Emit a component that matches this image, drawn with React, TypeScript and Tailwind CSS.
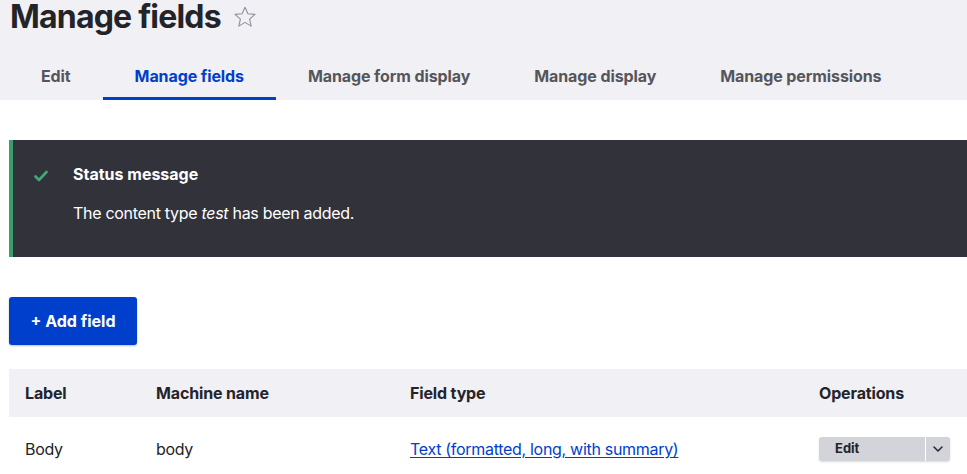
import { ChevronDown } from "lucide-react";

const tabs = [
    { label: "Edit", active: false },
    { label: "Manage fields", active: true },
    { label: "Manage form display", active: false },
    { label: "Manage display", active: false },
    { label: "Manage permissions", active: false },
];

function Star() {
    return (
        <svg width="24" height="24" viewBox="0 0 24 24" className="shrink-0">
            <path
                d="M12 2.2l2.9 6.6 7.1.6-5.4 4.7 1.6 7-6.2-3.7-6.2 3.7 1.6-7L2 9.4l7.1-.6z"
                fill="none"
                stroke="#8e929c"
                strokeWidth="1.1"
                strokeLinejoin="round"
            />
        </svg>
    );
}

function Check() {
    return (
        <svg width="14" height="12" viewBox="0 0 14 12">
            <path
                d="M1.5 6.5l3.5 3.5 7.5-8"
                fill="none"
                stroke="#42a877"
                strokeWidth="2.6"
                strokeLinecap="round"
                strokeLinejoin="round"
            />
        </svg>
    );
}

export default function App() {
    return (
        <div
            className="w-[967px] h-[474px] overflow-hidden bg-white text-[#232429]"
            style={{ fontFamily: "Inter, 'Noto Sans', sans-serif" }}
        >
            {/* header */}
            <div className="bg-[#f0f0f5] h-[100px] flex flex-col">
                <div className="pl-[10px] flex items-center gap-[12px] h-[52px] -mt-[9px]">
                    <h1 className="text-[32px] font-bold leading-[34px] tracking-[-0.8px] text-[#232429]">
                        Manage fields
                    </h1>
                    <Star />
                </div>
                <nav className="flex pl-[9px] h-[48px] mt-[9px]">
                    {tabs.map((t) => (
                        <div
                            key={t.label}
                            className={
                                t.active
                                    ? "px-8 flex items-center text-[16px] font-bold tracking-[-0.1px] text-[#003ecc] border-b-[3px] border-[#003ecc] pt-[3px]"
                                    : "px-8 flex items-center text-[16px] font-bold tracking-[-0.1px] text-[#55565b] border-b-[3px] border-transparent pt-[3px]"
                            }
                        >
                            {t.label}
                        </div>
                    ))}
                </nav>
            </div>

            <div className="pl-[9px] pt-[40px]">
                {/* status message */}
                <div className="h-[117px] bg-[#32323b] border-l-[4px] border-[#3b9d6c] flex">
                    <div className="w-[60px] pl-[21px] pt-[30px]">
                        <Check />
                    </div>
                    <div className="pt-[24px] text-white">
                        <div className="text-[16px] font-bold leading-[20px]">Status message</div>
                        <div className="text-[16px] leading-[20px] mt-[19px] tracking-[-0.3px]">
                            The content type <em>test</em> has been added.
                        </div>
                    </div>
                </div>

                {/* add field */}
                <div className="pt-[40px]">
                    <button className="h-[48px] w-[128px] bg-[#003ecc] text-white text-[16px] font-bold rounded-[3px] shadow-[0_1px_2px_rgba(0,0,0,0.25)]">
                        + Add field
                    </button>
                </div>

                {/* table */}
                <div className="mt-[24px]">
                    <div className="grid grid-cols-[131px_254px_409px_1fr] h-[48px] items-center bg-[#f0f0f5] text-[16px] font-bold tracking-[-0.15px]">
                        <div className="px-4">Label</div>
                        <div className="px-4">Machine name</div>
                        <div className="px-4">Field type</div>
                        <div className="px-4">Operations</div>
                    </div>
                    <div className="grid grid-cols-[131px_254px_409px_1fr] h-[64px] items-center text-[16px] tracking-[-0.3px]">
                        <div className="px-4">Body</div>
                        <div className="px-4">body</div>
                        <div className="px-4">
                            <a href="#" className="text-[#003ecc] underline underline-offset-2">
                                Text (formatted, long, with summary)
                            </a>
                        </div>
                        <div className="px-4 tracking-normal">
                            <div className="flex w-[131px] h-[24px] rounded-[3px] bg-[#d3d4d9] shadow-[0_1px_2px_rgba(0,0,0,0.15)]">
                                <div className="flex-1 flex items-center pl-[16px] text-[13px] font-bold text-[#232429] border-r border-white">
                                    Edit
                                </div>
                                <div className="w-[24px] flex items-center justify-center text-[#232429]">
                                    <ChevronDown size={16} strokeWidth={2.2} />
                                </div>
                            </div>
                        </div>
                    </div>
                </div>
            </div>
        </div>
    );
}
